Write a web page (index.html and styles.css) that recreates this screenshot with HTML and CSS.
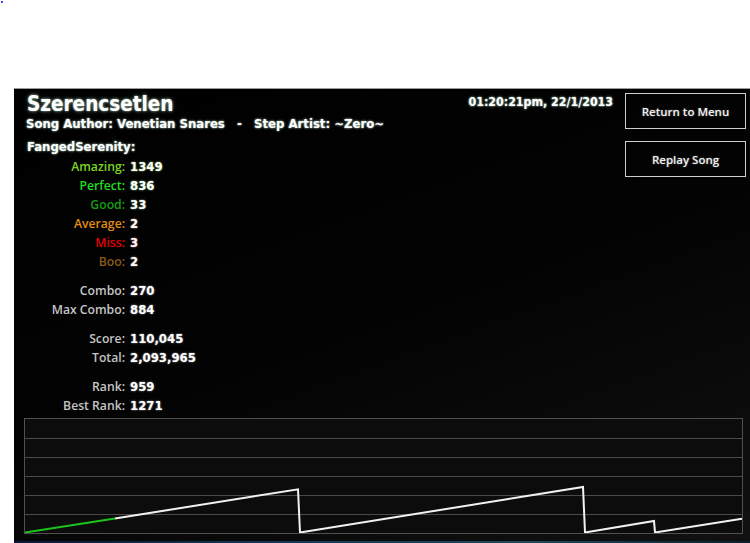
FILE: index.html
```html
<!DOCTYPE html>
<html>
<head>
<meta charset="utf-8">
<link rel="stylesheet" href="styles.css">
</head>
<body>
<span class="dot"></span>
<div class="panel">
  <div class="top">
    <div class="head">
      <div class="title-row">
        <h1 class="title">Szerencsetlen</h1>
        <div class="date">01:20:21pm, 22/1/2013</div>
      </div>
      <div class="author">Song Author: Venetian Snares &nbsp;&nbsp;-&nbsp;&nbsp; Step Artist: ~Zero~</div>
      <div class="player">FangedSerenity:</div>
    </div>
    <div class="buttons">
      <button class="btn">Return to Menu</button>
      <button class="btn">Replay Song</button>
    </div>
  </div>
  <div class="stats">
    <div class="row"><span class="lbl amazing">Amazing:</span><span class="val v-amazing">1349</span></div>
    <div class="row"><span class="lbl perfect">Perfect:</span><span class="val v-perfect">836</span></div>
    <div class="row"><span class="lbl good">Good:</span><span class="val v-good">33</span></div>
    <div class="row"><span class="lbl average">Average:</span><span class="val v-average">2</span></div>
    <div class="row"><span class="lbl miss">Miss:</span><span class="val v-miss">3</span></div>
    <div class="row"><span class="lbl boo">Boo:</span><span class="val v-boo">2</span></div>
    <div class="row grp"><span class="lbl">Combo:</span><span class="val">270</span></div>
    <div class="row"><span class="lbl">Max Combo:</span><span class="val">884</span></div>
    <div class="row grp"><span class="lbl">Score:</span><span class="val">110,045</span></div>
    <div class="row"><span class="lbl">Total:</span><span class="val">2,093,965</span></div>
    <div class="row grp"><span class="lbl">Rank:</span><span class="val">959</span></div>
    <div class="row"><span class="lbl">Best Rank:</span><span class="val">1271</span></div>
  </div>
  <div class="chart">
    <svg width="717" height="114" viewBox="0 0 717 114">
      <g stroke="#4a4a4a" stroke-width="1">
        <line x1="0" y1="19.5" x2="717" y2="19.5"/>
        <line x1="0" y1="38.5" x2="717" y2="38.5"/>
        <line x1="0" y1="57.5" x2="717" y2="57.5"/>
        <line x1="0" y1="76.5" x2="717" y2="76.5"/>
        <line x1="0" y1="95.5" x2="717" y2="95.5"/>
      </g>
      <polyline points="90,99.5 273,70.3 275,113.5 558,68 560,113.5 629,102 630,113.5 717,99.7" fill="none" stroke="#f2f2f2" stroke-width="2"/>
      <polyline points="0,113.5 90,99.5" fill="none" stroke="#1bc41b" stroke-width="2"/>
    </svg>
  </div>
  <div class="strip"></div>
</div>
</body>
</html>
```

FILE: styles.css
```css
html, body {
  margin: 0;
  padding: 0;
  background: #ffffff;
}
body {
  width: 750px;
  height: 543px;
  overflow: hidden;
  position: relative;
}
.dot {
  position: absolute;
  left: 1px;
  top: 1px;
  width: 2px;
  height: 2px;
  background: #4050ff;
}
.panel {
  margin: 88px 0 0 14px;
  width: 736px;
  height: 455px;
  box-sizing: border-box;
  border-top: 1px solid #9a9a9a;
  background: linear-gradient(160deg, #000000 0%, #030303 50%, #111111 100%);
  display: flex;
  flex-direction: column;
  font-family: "DejaVu Sans Condensed", "DejaVu Sans", sans-serif;
  color: #ffffff;
  position: relative;
}
.top {
  display: flex;
  justify-content: space-between;
}
.head {
  flex: 1;
  padding: 3px 12px 0 13px;
}
.title-row {
  display: flex;
  justify-content: space-between;
  align-items: flex-start;
}
.title {
  margin: 0;
  font-size: 20.5px;
  font-weight: bold;
  line-height: 24px;
  text-shadow: 0 0 2px #9fb8a8, 0 0 4px rgba(130,170,150,0.7);
}
.date {
  font-size: 12.3px;
  font-weight: bold;
  line-height: 16px;
  margin-top: 2px;
  text-shadow: 0 0 2px #9fb8a8, 0 0 3px rgba(130,170,150,0.6);
}
.author {
  font-size: 13px;
  font-weight: bold;
  line-height: 16px;
  margin-left: -1px;
  text-shadow: 0 0 2px #9fb8a8, 0 0 3px rgba(130,170,150,0.6);
}
.player {
  margin-top: 7px;
  font-size: 13px;
  font-weight: bold;
  line-height: 16px;
  text-shadow: 0 0 2px #9fb8a8, 0 0 3px rgba(130,170,150,0.6);
}
.buttons {
  width: 121px;
  margin: 4px 4px 0 0;
  display: flex;
  flex-direction: column;
  gap: 12px;
}
.btn {
  height: 36px;
  background: transparent;
  border: 1px solid #cfcfcf;
  color: #f0f0f0;
  font-family: "Open Sans", "Noto Sans", sans-serif;
  font-weight: 600;
  font-size: 11.5px;
  padding: 0;
  text-shadow: 0 0 2px rgba(200,200,200,0.5);
}
.stats {
  margin-top: -20px;
  display: flex;
  flex-direction: column;
}
.row {
  display: flex;
  align-items: center;
  height: 19px;
  gap: 5px;
}
.row.grp {
  margin-top: 10px;
}
.lbl {
  width: 111px;
  flex: none;
  text-align: right;
  font-family: "Open Sans", "Noto Sans", sans-serif;
  font-weight: 600;
  font-size: 12.2px;
  color: #c4c4c4;
  line-height: 19px;
}
.val {
  font-size: 13px;
  font-weight: bold;
  line-height: 19px;
  color: #ffffff;
  text-shadow: 0 0 2px #a0a0a0;
}
.amazing { color: #7ed321; }
.perfect { color: #22dd22; }
.good { color: #169e16; }
.average { color: #e08c12; }
.miss { color: #e20000; }
.boo { color: #8a5a1c; }
.v-amazing { text-shadow: 0 0 2px #9ed860; }
.v-perfect { text-shadow: 0 0 2px #8fe08f; }
.v-good { text-shadow: 0 0 2px #90c090; }
.v-average { text-shadow: 0 0 2px #e0b080; }
.v-miss { text-shadow: 0 0 2px #e08080; }
.v-boo { text-shadow: 0 0 2px #c0a080; }
.chart {
  margin: 3px 0 0 10px;
  width: 717px;
  height: 114px;
  border: 1px solid #505050;
  background: #0c0c0c;
}
.chart svg {
  display: block;
}
.strip {
  position: absolute;
  left: 0;
  right: 0;
  bottom: 0;
  height: 2px;
  background: linear-gradient(90deg, #0a1a3a, #123a5a 40%, #1a4a5a 70%, #0a2030);
}
```
